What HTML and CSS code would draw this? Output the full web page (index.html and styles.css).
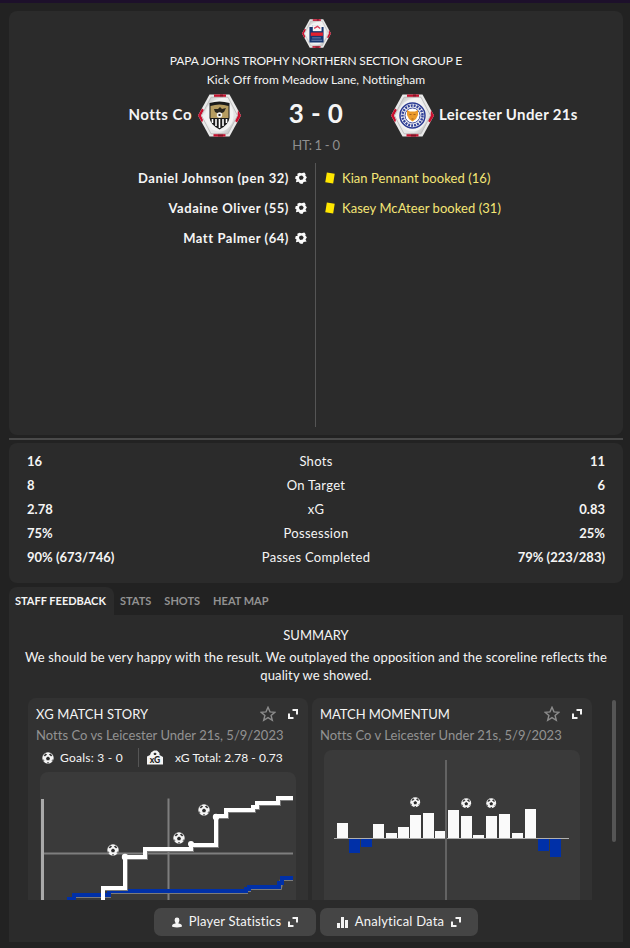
FILE: index.html
```html
<!DOCTYPE html>
<html lang="en">
<head>
    <meta charset="UTF-8">
    <meta name="viewport" content="width=device-width, initial-scale=1.0">
    <title>Notts Co 3 - 0 Leicester Under 21s</title>
    <link rel="stylesheet" href="styles.css">
</head>
<body>
    <!-- Shared icons -->
    <svg class="sprite">
        <symbol id="hex" viewBox="0 0 43 43">
            <linearGradient id="metal" x1="0" y1="0" x2="1" y2="1">
                <stop offset="0" stop-color="#a9a9a9"/>
                <stop offset="0.3" stop-color="#f4f4f4"/>
                <stop offset="0.75" stop-color="#e2e2e2"/>
                <stop offset="1" stop-color="#a0a0a0"/>
            </linearGradient>
            <path d="M11.5 0.5H31.5L43 21.5L31.5 42.5H11.5L0 21.5Z" fill="#e9e9e9"/>
            <path d="M16 0.5h12v3H16zM15.500 39.500h12v3h-12z" fill="#c8102e"/>
            <path d="M20 39.500h5v3h-5zM22 0.500h3v3h-3z" fill="#8a1024"/>
            <path d="M4 14.500L0 21.500L4 28.500L5 26L3 21.500L6 16ZM39 14.500L43 21.500L39 28.500L37 27L39.500 21.500L40 16Z" fill="#c8102e"/>
            <path d="M13 3.200H30L39.500 21.500L30 39.800H13L3.500 21.500Z" fill="url(#metal)" stroke="#b5b5b5" stroke-width="0.800"/>
            <ellipse cx="21.500" cy="21.500" rx="14" ry="16" fill="#f3f3f3"/>
        </symbol>
        <symbol id="ball" viewBox="0 0 12 12">
            <circle cx="6" cy="6" r="5.700" fill="#f5f5f5"/>
            <path d="M6 4.600L8 6L7.300 8.300H4.700L4 6Z" fill="#2b2b2b"/>
            <path d="M3.300 1.500L5.200 2.500L3.200 4.300L1.500 4ZM8.700 1.500L6.800 2.500L8.800 4.300L10.500 4ZM0.600 7L2.300 8.200L2 9.700ZM11.400 7L9.700 8.200L10 9.700ZM5 10.300H7L6.500 11.600H5.500Z" fill="#3a3a3a"/>
        </symbol>
        <symbol id="goal" viewBox="0 0 12 12">
            <path d="M2.300 1.800L4.500 0.700L6.500 1.200L9.300 0.400L10.700 2.300L10.300 3.600L11.900 5.300L10.500 7.400L11.600 9.400L8.600 10L7.400 11.900L4.900 11.600L3.600 9.800L0.900 10.200L1.500 7.500L0.100 6.600L0.800 4L2.600 3.900Z" fill="#fafafa"/>
            <path d="M4.600 4L7 3.500L8.700 5.200L7.700 7.600L5.200 7.900L3.900 6Z" fill="#2b2b2b"/>
        </symbol>
        <symbol id="star" viewBox="0 0 16 16">
            <path d="M8 1.300L10 5.900L14.900 6.300L11.100 9.400L12.300 14.300L8 11.600L3.700 14.300L4.900 9.400L1.100 6.300L6 5.900Z" fill="none" stroke="#8c8c8c" stroke-width="1.400"/>
        </symbol>
        <symbol id="expand" viewBox="0 0 10 10">
            <path d="M4.500 1H9V5.500M1 4.500V9H5.500" fill="none" stroke="#f4f4f4" stroke-width="2"/>
        </symbol>
    </svg>

    <main class="page">
        <section class="match">
            <svg class="competition-logo" viewBox="0 0 43 43">
                <use href="#hex"/>
                <path d="M11 12H16V9H28V12H32V35H11Z" fill="#17356f"/>
                <path d="M16 9H29V18H16Z" fill="#f7f7f7"/>
                <path d="M18 14l5-3l4 3" fill="none" stroke="#d9405a" stroke-width="2"/>
                <path d="M13 20H31V25H13Z" fill="#e4202e"/>
                <path d="M15 28H28M14 31.500H30" stroke="#8094bd" stroke-width="1.200"/>
            </svg>
            <p class="competition">PAPA JOHNS TROPHY NORTHERN SECTION GROUP E</p>
            <p class="venue">Kick Off from Meadow Lane, Nottingham</p>

            <div class="scoreline">
                <div class="team home">
                    <span>Notts Co</span>
                    <svg class="crest" viewBox="0 0 43 43">
                        <use href="#hex"/>
                        <path d="M11.500 9Q21.500 6 31.500 9V24Q30.500 31 21.500 35.500Q12.500 31 11.500 24Z" fill="#1b1b1b"/>
                        <path d="M12.500 12Q21.500 9 30.500 12V24H12.500Z" fill="#b79d61"/>
                        <path d="M16 15l4 0l2-2l2 2l4-1l-2 4l-2 1h-5l-2-1z" fill="#29251d"/>
                        <circle cx="21.500" cy="21" r="2.700" fill="#f4f4f4"/>
                        <path d="M20.500 20h2v2h-2z" fill="#222"/>
                        <path d="M14.500 25v4M18 25v7M21.500 25v9M25 25v7M28.500 25v4" stroke="#fff" stroke-width="1.600"/>
                    </svg>
                </div>
                <div class="score">3 - 0</div>
                <div class="team away">
                    <svg class="crest" viewBox="0 0 43 43">
                        <use href="#hex"/>
                        <circle cx="21.500" cy="21.500" r="12.500" fill="#f4f4f4" stroke="#2b3b93" stroke-width="1.500"/>
                        <circle cx="21.500" cy="21.500" r="10" fill="none" stroke="#34449a" stroke-width="2.500" stroke-dasharray="2 1"/>
                        <circle cx="21.500" cy="21.500" r="7.500" fill="#fff" stroke="#2b3b93" stroke-width="0.900"/>
                        <path d="M16 16l3 1.500h5l3-1.500v5l-2 4l-3.500 2.500l-3.500-2.500l-2-4z" fill="#ea9a2c"/>
                        <path d="M18.500 20.500h2M22.500 20.500h2M20.500 25h2" stroke="#a5601f" stroke-width="1"/>
                    </svg>
                    <span>Leicester Under 21s</span>
                </div>
            </div>
            <p class="half-time">HT: 1 - 0</p>

            <div class="events">
                <ul class="event-list home-events">
                    <li><span>Daniel Johnson (pen 32)</span><svg class="event-icon"><use href="#goal"/></svg></li>
                    <li><span>Vadaine Oliver (55)</span><svg class="event-icon"><use href="#goal"/></svg></li>
                    <li><span>Matt Palmer (64)</span><svg class="event-icon"><use href="#goal"/></svg></li>
                </ul>
                <ul class="event-list away-events">
                    <li><i class="yellow-card"></i><span>Kian Pennant booked (16)</span></li>
                    <li><i class="yellow-card"></i><span>Kasey McAteer booked (31)</span></li>
                </ul>
            </div>
        </section>

        <hr class="divider">

        <section class="stats">
            <div class="stat"><b>16</b><span>Shots</span><b>11</b></div>
            <div class="stat"><b>8</b><span>On Target</span><b>6</b></div>
            <div class="stat"><b>2.78</b><span>xG</span><b>0.83</b></div>
            <div class="stat"><b>75%</b><span>Possession</span><b>25%</b></div>
            <div class="stat"><b>90% (673/746)</b><span>Passes Completed</span><b>79% (223/283)</b></div>
        </section>

        <nav class="tabs">
            <a class="tab active">STAFF FEEDBACK</a>
            <a class="tab">STATS</a>
            <a class="tab">SHOTS</a>
            <a class="tab">HEAT MAP</a>
        </nav>

        <section class="feedback">
            <h2 class="summary-title">SUMMARY</h2>
            <p class="summary-text">We should be very happy with the result. We outplayed the opposition and the scoreline reflects the<br>quality we showed.</p>

            <div class="scroll-area">
                <article class="card">
                    <header class="card-header">
                        <h3 class="card-title">XG MATCH STORY</h3>
                        <svg class="star"><use href="#star"/></svg>
                        <svg class="expand"><use href="#expand"/></svg>
                    </header>
                    <p class="card-subtitle">Notts Co vs Leicester Under 21s, 5/9/2023</p>
                    <div class="totals">
                        <div class="total-goals">
                            <svg class="total-ball"><use href="#ball"/></svg>
                            <span>Goals: 3 - 0</span>
                        </div>
                        <div class="total-xg">
                            <svg class="xg-icon" viewBox="0 0 16 15">
                                <path d="M0 14.500V6.500L3 5L4 2.500L7 0.500H10L12.500 3V5L16 7V14.500Z" fill="#f4f4f4"/>
                                <path d="M6.500 3.500L8 2.500L9.500 3.500L9 5H7Z" fill="#333"/>
                                <text class="xg-label" x="8" y="13.200">xG</text>
                            </svg>
                            <span>xG Total: 2.78 - 0.73</span>
                        </div>
                    </div>
                    <div class="chart">
                        <svg width="256" height="140" viewBox="0 0 256 140">
                            <path d="M128.500 26.500V140M4 81.500H253" stroke="#7e7e7e" stroke-width="2"/>
                            <path d="M2.500 27V140" stroke="#a9a9a9" stroke-width="3"/>
                            <!-- Leicester -->
                            <path class="line-shadow" d="M27 128H34V124H69V120H206V118H209V116H240L242 107H253"/>
                            <path class="line away-line" d="M27 127H34V123H69V119H206V117H209V115H239V111H242V106H253"/>
                            <!-- Notts Co -->
                            <path class="line-shadow" d="M63 140V117H86V86H106V78H152V74H177V45H187V39H214V36H218V32H239V27H253"/>
                            <path class="line home-line" d="M63 140V116H85V85H105V77H151V73H176V44H186V38H213V35H217V31H238V26H253"/>
                            <g fill="#fff">
                                <circle cx="85" cy="85" r="3.200"/>
                                <circle cx="151" cy="72" r="3"/>
                                <circle cx="176" cy="45" r="3.200"/>
                            </g>
                            <use href="#ball" x="67" y="72" width="12" height="12"/>
                            <use href="#ball" x="133" y="60" width="12" height="12"/>
                            <use href="#ball" x="158" y="32" width="12" height="12"/>
                        </svg>
                    </div>
                </article>

                <article class="card">
                    <header class="card-header">
                        <h3 class="card-title momentum-title">MATCH MOMENTUM</h3>
                        <svg class="star"><use href="#star"/></svg>
                        <svg class="expand"><use href="#expand"/></svg>
                    </header>
                    <p class="card-subtitle">Notts Co v Leicester Under 21s, 5/9/2023</p>
                    <div class="chart">
                        <svg width="256" height="160" viewBox="0 0 256 160">
                            <g fill="#fafafa">
                                <rect x="13" y="73" width="11" height="15"/>
                                <rect x="49" y="74" width="11" height="14"/>
                                <rect x="62" y="83" width="11" height="5"/>
                                <rect x="74" y="77" width="11" height="11"/>
                                <rect x="86" y="65" width="11" height="23"/>
                                <rect x="99" y="63" width="11" height="25"/>
                                <rect x="111" y="81" width="11" height="7"/>
                                <rect x="124" y="60" width="11" height="28"/>
                                <rect x="137" y="66" width="11" height="22"/>
                                <rect x="149" y="85" width="11" height="3"/>
                                <rect x="162" y="66" width="11" height="22"/>
                                <rect x="175" y="64" width="11" height="24"/>
                                <rect x="188" y="83" width="11" height="5"/>
                                <rect x="201" y="59" width="11" height="29"/>
                            </g>
                            <g fill="#0030a8">
                                <rect x="25" y="89" width="11" height="14"/>
                                <rect x="37" y="89" width="11" height="8"/>
                                <rect x="214" y="89" width="11" height="12"/>
                                <rect x="226" y="89" width="11" height="18"/>
                            </g>
                            <rect x="10" y="88" width="235" height="1" fill="#b0b0b0"/>
                            <rect x="121" y="10" width="2" height="150" fill="#636363"/>
                            <use href="#ball" x="86" y="47" width="10.500" height="10.500"/>
                            <use href="#ball" x="137" y="48" width="10.500" height="10.500"/>
                            <use href="#ball" x="162" y="48" width="10.500" height="10.500"/>
                        </svg>
                    </div>
                </article>
                <div class="scrollbar"></div>
            </div>

            <div class="buttons">
                <button class="button player-button">
                    <svg width="10" height="11" viewBox="0 0 10 11">
                        <path d="M5 0.500a2.400 2.400 0 0 1 2.400 2.400C7.400 4.500 6.400 5.500 6.400 6.500C8.500 6.500 10 7.300 10 9.300C10 10 8 10.500 5 10.500S0 10 0 9.300C0 7.300 1.500 6.500 3.600 6.500C3.600 5.500 2.600 4.500 2.600 2.900A2.400 2.400 0 0 1 5 0.500Z" fill="#f4f4f4"/>
                    </svg>
                    <span>Player Statistics</span>
                    <svg class="expand"><use href="#expand"/></svg>
                </button>
                <button class="button data-button">
                    <svg width="11" height="11" viewBox="0 0 11 11">
                        <path d="M0 6h3v5H0zM4 0h3v11H4zM8 3h3v8H8z" fill="#f4f4f4"/>
                    </svg>
                    <span>Analytical Data</span>
                    <svg class="expand"><use href="#expand"/></svg>
                </button>
            </div>
        </section>
    </main>
</body>
</html>
```

FILE: styles.css
```css
* {
    box-sizing: border-box;
}

body {
    margin: 0;
    height: 948px;
    overflow: hidden;
    background-color: #222222;
    border-top: 3px solid #1d102b;
    font-family: Lato, "Open Sans", sans-serif;
    font-size: 13px;
    color: #f5f5f5;
}

h2, h3, p, ul {
    margin: 0;
    padding: 0;
    font-weight: normal;
}

svg {
    display: block;
    flex-shrink: 0;
}

.sprite {
    width: 0;
    height: 0;
}

.page {
    padding: 8px 7px 0 9px;
}

/* Match header */
.match {
    display: flex;
    flex-direction: column;
    align-items: center;
    height: 424px;
    padding-top: 8px;
    background-color: #2b2b2b;
    border-radius: 8px;
}

.competition-logo {
    width: 29px;
    height: 29px;
}

.competition {
    height: 20px;
    margin-top: 3px;
    line-height: 20px;
    font-size: 12px;
    letter-spacing: -0.15px;
}

.venue {
    height: 18px;
    line-height: 18px;
    font-size: 12px;
    letter-spacing: 0.03px;
}

.scoreline {
    display: grid;
    grid-template-columns: 1fr 150px 1fr;
    align-items: center;
    width: 100%;
    height: 43px;
    margin-top: 5px;
}

.team {
    display: flex;
    align-items: center;
    font-size: 15px;
    font-weight: bold;
    white-space: nowrap;
}

.team span {
    padding-bottom: 3px;
    letter-spacing: 0.35px;
}

.home {
    justify-content: flex-end;
    gap: 6px;
}

.home span {
    letter-spacing: 0.5px;
}

.away {
    gap: 5px;
}

.crest {
    width: 43px;
    height: 43px;
}

.score {
    padding-bottom: 5px;
    text-align: center;
    font-size: 26px;
    font-weight: bold;
    letter-spacing: 0.4px;
}

.half-time {
    height: 16px;
    line-height: 16px;
    letter-spacing: -0.3px;
    color: #8f8f8f;
}

.events {
    display: grid;
    grid-template-columns: 1fr 1fr;
    width: 100%;
    height: 264px;
    margin-top: 10px;
}

.event-list {
    list-style: none;
}

.event-list li {
    display: flex;
    align-items: center;
    height: 30px;
}

.event-list span {
    padding-bottom: 1px;
}

.home-events {
    padding-right: 8px;
    border-right: 1px solid #555555;
    font-weight: bold;
    letter-spacing: 0.56px;
}

.home-events li {
    justify-content: flex-end;
    gap: 6px;
}

.away-events {
    padding-left: 9px;
    letter-spacing: 0.06px;
    color: #f4e676;
}

.away-events li {
    gap: 7px;
}

.event-icon {
    width: 12px;
    height: 12px;
}

.yellow-card {
    width: 8px;
    height: 10px;
    margin: 0 1px;
    background-color: #ffe600;
    transform: rotate(9deg);
}

.divider {
    height: 2px;
    margin: 3px 0;
    border: none;
    background-color: #4a4a4a;
}

/* Match stats */
.stats {
    height: 140px;
    padding: 6px 18px 0 18px;
    background-color: #2b2b2b;
    border-radius: 8px;
}

.stat {
    display: grid;
    grid-template-columns: 1fr 140px 1fr;
    height: 24px;
    line-height: 24px;
}

.stat span {
    text-align: center;
    letter-spacing: 0.3px;
}

.stat b:last-child {
    text-align: right;
}

/* Tabs */
.tabs {
    display: flex;
    height: 28px;
    margin-top: 4px;
    line-height: 28px;
    font-size: 11px;
    font-weight: bold;
}

.tab {
    padding: 0 7px 0 6px;
    border-radius: 8px 8px 0 0;
    color: #929292;
}

.tab.active {
    width: 105px;
    padding-right: 0;
    background-color: #2b2b2b;
    color: #f5f5f5;
}

/* Staff feedback */
.feedback {
    height: 327px;
    padding-top: 11px;
    background-color: #2b2b2b;
}

.summary-title {
    height: 18px;
    line-height: 18px;
    font-size: 13px;
    text-align: center;
}

.summary-text {
    height: 36px;
    margin-top: 4px;
    line-height: 18px;
    text-align: center;
    letter-spacing: 0.13px;
    white-space: nowrap;
}

.scroll-area {
    display: flex;
    gap: 4px;
    height: 202px;
    margin-top: 14px;
    padding-left: 19px;
    overflow: hidden;
}

.card {
    width: 280px;
    height: 260px;
    padding: 6px 12px 0;
    background-color: #323232;
    border-radius: 8px;
}

.card-header {
    display: flex;
    align-items: center;
    height: 20px;
    margin: 0 -2px 0 -4px;
}

.card-title {
    flex: 1;
    font-size: 13px;
    letter-spacing: 0.12px;
}

.momentum-title {
    letter-spacing: -0.05px;
}

.star {
    width: 16px;
    height: 16px;
    margin-right: 12px;
}

.expand {
    width: 10px;
    height: 10px;
}

.card-subtitle {
    height: 23px;
    margin-left: -4px;
    line-height: 22px;
    letter-spacing: 0.03px;
    color: #929292;
    white-space: nowrap;
}

.totals {
    display: flex;
    align-items: center;
    height: 19px;
    margin: 1px 0 5px 2px;
    font-size: 12px;
    letter-spacing: 0.05px;
}

.total-goals {
    display: flex;
    align-items: center;
    gap: 6px;
    width: 97px;
    height: 19px;
    border-right: 1px solid #555555;
}

.total-goals span {
    letter-spacing: 0.25px;
}

.total-ball {
    width: 12px;
    height: 12px;
}

.total-xg {
    display: flex;
    align-items: center;
    gap: 12px;
    padding-left: 8px;
    white-space: nowrap;
}

.xg-icon {
    width: 16px;
    height: 15px;
}

.xg-label {
    fill: #222222;
    font-size: 8.5px;
    font-weight: 900;
    text-anchor: middle;
}

.chart {
    margin-top: 3px;
    background-color: #3a3a3a;
    border-radius: 8px;
}

.line,
.line-shadow {
    fill: none;
    stroke-width: 4;
}

.line-shadow {
    stroke: #7b7b7b;
}

.home-line {
    stroke: #ffffff;
}

.away-line {
    stroke: #0030a8;
}

.scrollbar {
    width: 4px;
    height: 142px;
    margin: 2px 0 0 16px;
    background-color: #555555;
    border-radius: 2px;
}

.buttons {
    display: flex;
    gap: 4px;
    margin: 8px 0 0 145px;
}

.button {
    display: flex;
    align-items: center;
    justify-content: center;
    height: 28px;
    padding: 0;
    border: none;
    border-radius: 7px;
    background-color: #454545;
    color: #f5f5f5;
    font-family: inherit;
    font-size: 13px;
}

.button span {
    padding-bottom: 2px;
    letter-spacing: 0.2px;
}

.player-button {
    gap: 7px;
    width: 162px;
}

.data-button {
    gap: 7px;
    width: 158px;
}
```
